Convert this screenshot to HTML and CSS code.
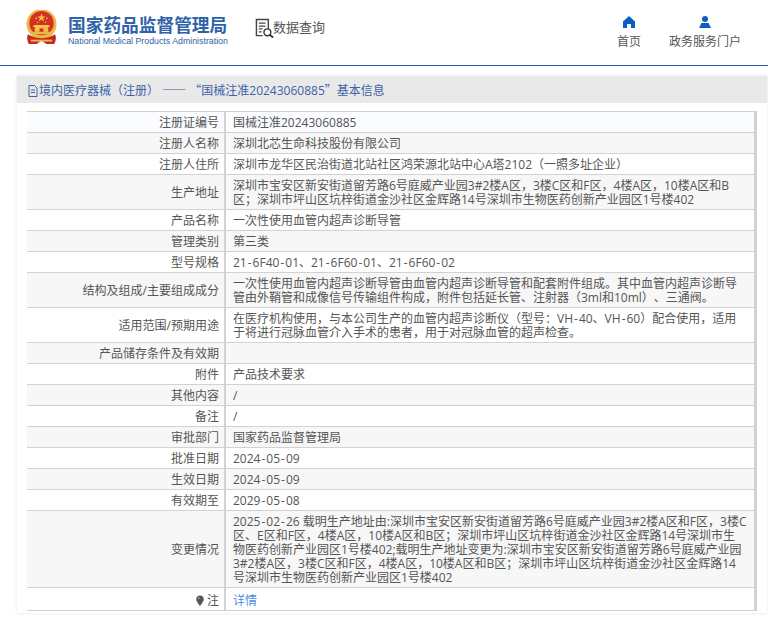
FILE: index.html
```html
<!DOCTYPE html>
<html lang="zh">
<head>
<meta charset="utf-8">
<title>国家药品监督管理局</title>
<link rel="stylesheet" href="styles.css">
</head>
<body>
<header class="site-header">
  <div class="brand">
    <svg class="emblem" viewBox="0 0 34 36" width="33" height="35">
      <circle cx="17" cy="14.5" r="15.5" fill="#e8b84a"/>
      <circle cx="17" cy="13.5" r="12.5" fill="#d6301f"/>
      <polygon points="17,3.5 18.1,6.6 21.3,6.6 18.7,8.5 19.7,11.6 17,9.7 14.3,11.6 15.3,8.5 12.7,6.6 15.9,6.6" fill="#f2c94c"/>
      <circle cx="11.5" cy="8.5" r="0.9" fill="#f2c94c"/><circle cx="22.5" cy="8.5" r="0.9" fill="#f2c94c"/>
      <circle cx="13" cy="12.5" r="0.8" fill="#f2c94c"/><circle cx="21" cy="12.5" r="0.8" fill="#f2c94c"/>
      <path d="M8 17.5H26L24.5 15.5H9.5Z" fill="#f2c94c"/>
      <rect x="10" y="17.5" width="14" height="5" fill="#f0c24a"/>
      <rect x="15" y="19" width="4" height="3.5" fill="#d6301f"/>
      <rect x="6" y="22.5" width="22" height="2.5" fill="#e8b84a"/>
      <path d="M3 25 Q1 30 4 35 H12 L17 31.5 L22 35 H30 Q33 30 31 25 Q24 29 17 29 Q10 29 3 25Z" fill="#c9281c"/>
      <path d="M6 30.5 H28 V32.5 H6Z" fill="#e8b84a"/>
    </svg>
    <div class="brand-text">
      <div class="brand-cn">国家药品监督管理局</div>
      <div class="brand-en">National Medical Products Administration</div>
    </div>
  </div>
  <div class="query">
    <svg class="query-icon" viewBox="0 0 21 21" width="20" height="20">
      <path d="M14 14.5V1.5H1.5V18.5H8" fill="none" stroke="#444" stroke-width="1.5"/>
      <path d="M4 5.5H11M4 8.5H11M4 11.5H8M4 14.5H7" stroke="#444" stroke-width="1.3"/>
      <circle cx="13" cy="15" r="3.6" fill="#fff" stroke="#333" stroke-width="1.5"/>
      <path d="M15.5 17.5L19 20.5" stroke="#333" stroke-width="2"/>
    </svg>
    <span class="query-label">数据查询</span>
  </div>
  <nav class="top-nav">
    <a class="nav-item nav-home">
      <svg viewBox="0 0 12 12" width="12" height="12"><path d="M6 0L12 5.6V12H8V8H4V12H0V5.6Z" fill="#0b5fc4"/></svg>
      <span>首页</span>
    </a>
    <a class="nav-item nav-portal">
      <svg viewBox="0 0 12 12" width="12" height="12"><circle cx="6" cy="3" r="3" fill="#0b5fc4"/><path d="M0 12L2.5 7H9.5L12 12Z" fill="#0b5fc4"/></svg>
      <span>政务服务门户</span>
    </a>
  </nav>
</header>
<div class="dots"></div>
<main class="panel">
  <div class="panel-head">
    <svg class="doc-icon" viewBox="0 0 10 12" width="10" height="12"><path d="M1 .5H6.5L9 3V11.5H1ZM3 5H7M3 7.5H7" fill="none" stroke="#3a62a8"/></svg>境内医疗器械（注册） <span class="cjk">——</span> <span class="cjk">“</span>国械注准20243060885<span class="cjk">”</span>基本信息
  </div>
  <div class="panel-body">
    <table class="info">
      <tr><th>注册证编号</th><td>国械注准20243060885</td></tr>
      <tr><th>注册人名称</th><td>深圳北芯生命科技股份有限公司</td></tr>
      <tr><th>注册人住所</th><td>深圳市龙华区民治街道北站社区鸿荣源北站中心A塔2102（一照多址企业）</td></tr>
      <tr><th>生产地址</th><td>深圳市宝安区新安街道留芳路6号庭威产业园3#2楼A区，3楼C区和F区，4楼A区，10楼A区和B区；深圳市坪山区坑梓街道金沙社区金辉路14号深圳市生物医药创新产业园区1号楼402</td></tr>
      <tr><th>产品名称</th><td>一次性使用血管内超声诊断导管</td></tr>
      <tr><th>管理类别</th><td>第三类</td></tr>
      <tr><th>型号规格</th><td>21<span class="hy">-</span>6F40<span class="hy">-</span>01、21<span class="hy">-</span>6F60<span class="hy">-</span>01、21<span class="hy">-</span>6F60<span class="hy">-</span>02</td></tr>
      <tr><th>结构及组成/主要组成成分</th><td>一次性使用血管内超声诊断导管由血管内超声诊断导管和配套附件组成。其中血管内超声诊断导管由外鞘管和成像信号传输组件构成，附件包括延长管、注射器（3ml和10ml）、三通阀。</td></tr>
      <tr><th>适用范围/预期用途</th><td>在医疗机构使用，与本公司生产的血管内超声诊断仪（型号：VH<span class="hy">-</span>40、VH<span class="hy">-</span>60）配合使用，适用于将进行冠脉血管介入手术的患者，用于对冠脉血管的超声检查。</td></tr>
      <tr><th>产品储存条件及有效期</th><td></td></tr>
      <tr><th>附件</th><td>产品技术要求</td></tr>
      <tr><th>其他内容</th><td>/</td></tr>
      <tr><th>备注</th><td>/</td></tr>
      <tr><th>审批部门</th><td>国家药品监督管理局</td></tr>
      <tr><th>批准日期</th><td>2024<span class="hy">-</span>05<span class="hy">-</span>09</td></tr>
      <tr><th>生效日期</th><td>2024<span class="hy">-</span>05<span class="hy">-</span>09</td></tr>
      <tr><th>有效期至</th><td>2029<span class="hy">-</span>05<span class="hy">-</span>08</td></tr>
      <tr><th>变更情况</th><td>2025<span class="hy">-</span>02<span class="hy">-</span>26 载明生产地址由:深圳市宝安区新安街道留芳路6号庭威产业园3#2楼A区和F区，3楼C区、E区和F区，4楼A区，10楼A区和B区；深圳市坪山区坑梓街道金沙社区金辉路14号深圳市生物医药创新产业园区1号楼402;载明生产地址变更为:深圳市宝安区新安街道留芳路6号庭威产业园3#2楼A区，3楼C区和F区，4楼A区，10楼A区和B区；深圳市坪山区坑梓街道金沙社区金辉路14号深圳市生物医药创新产业园区1号楼402</td></tr>
      <tr class="note-row"><th><svg class="pin" viewBox="0 0 8 11" width="8" height="11"><path d="M4 0.5C6.2 0.5 7.8 2.2 7.8 4.2C7.8 6.6 5.4 8.2 4.6 10.5H3.4C2.6 8.2 0.2 6.6 0.2 4.2C0.2 2.2 1.8 0.5 4 0.5Z" fill="#555"/><circle cx="2.8" cy="3" r="1" fill="#999"/></svg>注</th><td class="detail">详情</td></tr>
    </table>
  </div>
</main>
</body>
</html>
```
FILE: styles.css
```css
* { box-sizing: border-box; }
html, body { margin: 0; padding: 0; }
body {
  width: 768px;
  height: 621px;
  overflow: hidden;
  background: #fff;
  font-family: "Open Sans", "Noto Sans CJK SC", sans-serif;
  font-size: 12px;
  color: #555;
  text-spacing-trim: space-all;
}
.cjk { font-family: "Noto Sans CJK SC", sans-serif; }
.hy { display: inline-block; padding: 0 1px; line-height: 14px; height: 14px; }
.site-header {
  height: 66px;
  border-bottom: 1px solid #1f5ba8;
  display: flex;
  align-items: flex-start;
  position: relative;
}
.brand { display: flex; margin: 10px 0 0 25px; }
.emblem { display: block; }
.brand-text { margin-left: 10px; }
.brand-cn {
  font-family: "Noto Sans CJK SC", sans-serif;
  font-size: 17.7px;
  line-height: 20px;
  margin-top: 4px;
  font-weight: 700;
  color: #2f62a8;
  white-space: nowrap;
}
.brand-en {
  font-family: "Liberation Sans", sans-serif;
  font-size: 8.8px;
  line-height: 11px;
  margin-top: 2px;
  color: #2f62a8;
  white-space: nowrap;
}
.query { display: flex; align-items: center; margin: 18px 0 0 27px; }
.query-icon { display: block; }
.query-label {
  font-family: "Noto Sans CJK SC", sans-serif;
  font-size: 13px;
  line-height: 22px;
  color: #555;
  margin: -2px 0 0 -2px;
}
.top-nav { margin-left: auto; display: flex; margin-right: 27px; margin-top: 16px; }
.nav-item {
  display: flex;
  flex-direction: column;
  align-items: center;
  color: #555;
  font-family: "Noto Sans CJK SC", sans-serif;
  font-size: 12px;
  line-height: 16px;
}
.nav-item svg { display: block; margin-bottom: 5px; }
.nav-portal { margin-left: 28px; }
.dots {
  height: 3px;
  background-image: radial-gradient(#d8dde4 0.5px, transparent 0.6px);
  background-size: 2px 2px;
}
.panel {
  margin: 7px 1px 0 17px;
  height: 537px;
  box-shadow: 0 0 3px rgba(0,0,0,.12);
}
.panel-head {
  height: 27px;
  line-height: 28px;
  background: #e9e9e9;
  padding-left: 11px;
  color: #3a62a8;
  font-size: 12px;
  white-space: nowrap;
}
.doc-icon { vertical-align: -2px; margin-right: 1px; }
.panel-body { padding: 8px 0 0 10px; }
.info {
  width: 730px;
  border-collapse: collapse;
  table-layout: fixed;
  border-top: 1px solid #d2d2d2;
  border-right: 3px solid #d2d2d2;
  border-bottom: 1px solid #e4e4ec;
}
.info tr { border-bottom: 1px solid #d2d2d2; }
.info tr:nth-child(odd) { background: #fff; }
.info tr:first-child { background: #fafcff; }
.info tr:nth-child(even) { background: #f7f7f7; }
.info th, .info td {
  line-height: 14px;
  padding: 4px 7px 2px 7px;
  font-weight: 400;
  color: #555;
  vertical-align: middle;
}
.info th {
  width: 198px;
  text-align: right;
  padding-right: 5px;
  border-right: 2px solid #d2d2d2;
}
.info .note-row th, .info .note-row td { padding-top: 6px; padding-bottom: 2px; line-height: 14px; }
.pin { vertical-align: -1px; margin-right: 3px; }
.info .detail { color: #4a90e8; }
```
